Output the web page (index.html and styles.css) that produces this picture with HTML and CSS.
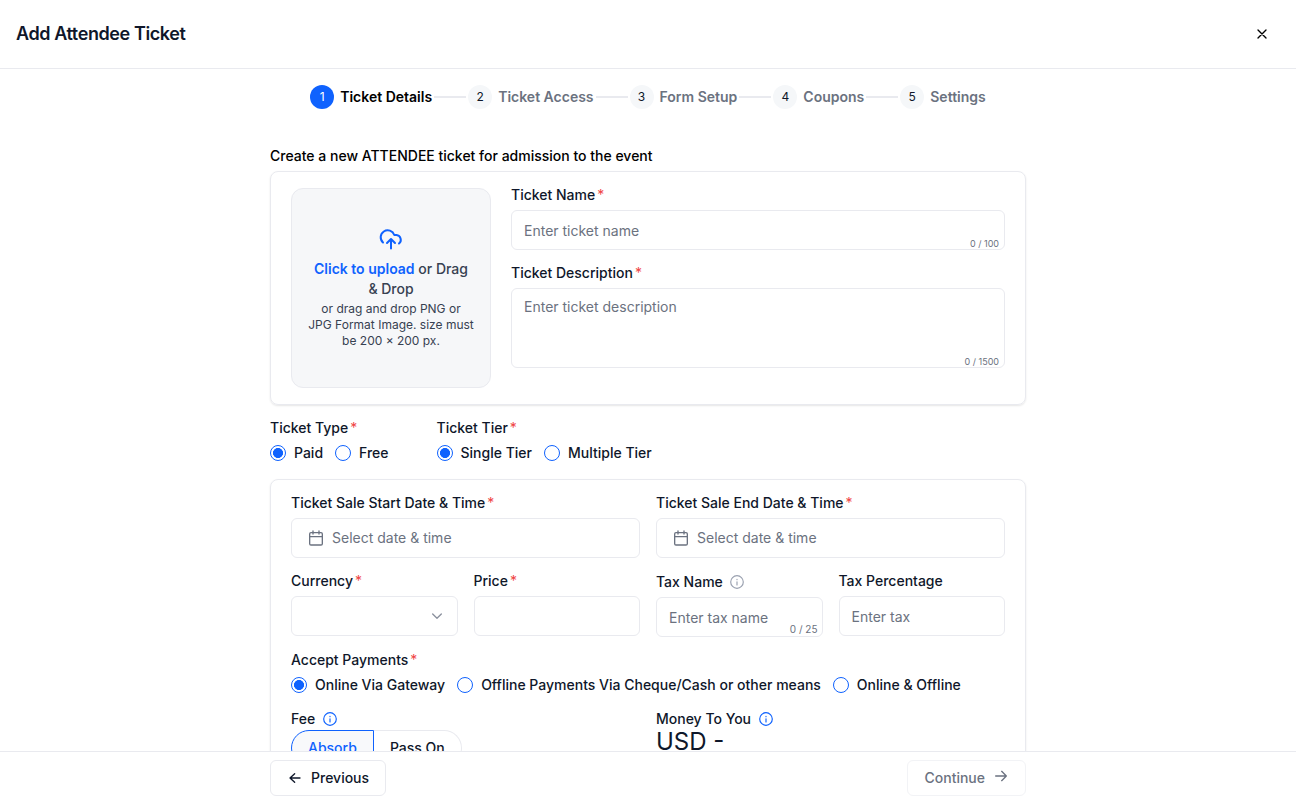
FILE: index.html
```html
<!DOCTYPE html>
<html lang="en">
<head>
    <meta charset="UTF-8">
    <meta name="viewport" content="width=device-width, initial-scale=1.0">
    <title>Add Attendee Ticket</title>
    <link rel="stylesheet" href="styles.css">
</head>
<body>
    <!-- Shared icons -->
    <svg class="sprite" aria-hidden="true">
        <symbol id="calendar" viewBox="0 0 24 24">
            <path d="M7.500 1.500v4.500M16.500 1.500v4.500M2.500 10h19"/>
            <rect x="2.500" y="4" width="19" height="18.500" rx="2"/>
        </symbol>
        <symbol id="info" viewBox="0 0 24 24">
            <circle cx="12" cy="12" r="10.800"/>
            <path d="M12 17v-5.500M12 7.500v.5"/>
        </symbol>
    </svg>

    <header class="header">
        <h1>Add Attendee Ticket</h1>
        <button type="button" class="close" aria-label="Close">
            <svg width="16" height="16" viewBox="0 0 24 24"><path d="M18 6 6 18M6 6l12 12"/></svg>
        </button>
    </header>

    <main class="content">
        <nav class="stepper">
            <div class="step active"><span class="num">1</span><span>Ticket Details</span></div>
            <div class="line"></div>
            <div class="step"><span class="num">2</span><span>Ticket Access</span></div>
            <div class="line"></div>
            <div class="step"><span class="num">3</span><span>Form Setup</span></div>
            <div class="line"></div>
            <div class="step"><span class="num">4</span><span>Coupons</span></div>
            <div class="line"></div>
            <div class="step"><span class="num">5</span><span>Settings</span></div>
        </nav>

        <form class="form">
            <p class="intro">Create a new ATTENDEE ticket for admission to the event</p>

            <section class="card details">
                <div class="upload">
                    <svg width="24" height="24" viewBox="0 0 24 24"><path d="M4 15.500A7 7 0 1 1 15.300 8H17.500a4.800 4.800 0 0 1 2.500 8.500M12 21.500v-9M8 16l4-4 4 4"/></svg>
                    <p class="upload-title"><b>Click to upload</b> or Drag &amp; Drop</p>
                    <p class="upload-text">or drag and drop PNG or JPG Format Image. size must be 200 × 200 px.</p>
                </div>
                <div class="fields">
                    <div class="field">
                        <label for="name">Ticket Name<i>*</i></label>
                        <div class="control">
                            <input type="text" id="name" placeholder="Enter ticket name">
                            <span class="count">0 / 100</span>
                        </div>
                    </div>
                    <div class="field">
                        <label for="description">Ticket Description<i>*</i></label>
                        <div class="control">
                            <textarea id="description" placeholder="Enter ticket description"></textarea>
                            <span class="count">0 / 1500</span>
                        </div>
                    </div>
                </div>
            </section>

            <div class="options">
                <div class="field type">
                    <label>Ticket Type<i>*</i></label>
                    <div class="radios">
                        <label><input type="radio" name="type" checked>Paid</label>
                        <label><input type="radio" name="type">Free</label>
                    </div>
                </div>
                <div class="field">
                    <label>Ticket Tier<i>*</i></label>
                    <div class="radios">
                        <label><input type="radio" name="tier" checked>Single Tier</label>
                        <label><input type="radio" name="tier">Multiple Tier</label>
                    </div>
                </div>
            </div>

            <section class="card sale">
                <div class="field wide">
                    <label>Ticket Sale Start Date &amp; Time<i>*</i></label>
                    <button type="button" class="date"><svg width="16" height="16"><use href="#calendar"/></svg>Select date &amp; time</button>
                </div>
                <div class="field wide">
                    <label>Ticket Sale End Date &amp; Time<i>*</i></label>
                    <button type="button" class="date"><svg width="16" height="16"><use href="#calendar"/></svg>Select date &amp; time</button>
                </div>
                <div class="field">
                    <label>Currency<i>*</i></label>
                    <button type="button" class="select" aria-label="Currency">
                        <svg width="16" height="16" viewBox="0 0 24 24"><path d="m5.500 9 6.500 6.500L18.500 9"/></svg>
                    </button>
                </div>
                <div class="field">
                    <label for="price">Price<i>*</i></label>
                    <input type="text" id="price">
                </div>
                <div class="field">
                    <label for="tax-name" class="with-icon">Tax Name<svg width="14" height="14"><use href="#info"/></svg></label>
                    <div class="control">
                        <input type="text" id="tax-name" placeholder="Enter tax name">
                        <span class="count tax-count">0 / 25</span>
                    </div>
                </div>
                <div class="field">
                    <label for="tax">Tax Percentage</label>
                    <input type="text" id="tax" placeholder="Enter tax">
                </div>
                <div class="field full">
                    <label>Accept Payments<i>*</i></label>
                    <div class="radios">
                        <label><input type="radio" name="payment" checked>Online Via Gateway</label>
                        <label><input type="radio" name="payment">Offline Payments Via Cheque/Cash or other means</label>
                        <label><input type="radio" name="payment">Online &amp; Offline</label>
                    </div>
                </div>
                <div class="fee wide">
                    <div class="fee-label">Fee<svg width="14" height="14"><use href="#info"/></svg></div>
                    <div class="tabs">
                        <button type="button" class="selected">Absorb</button>
                        <button type="button">Pass On</button>
                    </div>
                </div>
                <div class="fee wide">
                    <div class="fee-label">Money To You<svg width="14" height="14"><use href="#info"/></svg></div>
                    <div class="amount">USD -</div>
                </div>
            </section>
        </form>
    </main>

    <footer class="footer">
        <div class="footer-inner">
            <button type="button" class="btn">
                <svg width="16" height="16" viewBox="0 0 24 24"><path d="M19.500 12H4.500M11.500 5.500l-7 6.500 7 6.500"/></svg>Previous
            </button>
            <button type="button" class="btn next" disabled>
                Continue<svg width="16" height="16" viewBox="0 0 24 24"><path d="M4 12h16M13 5l7 7-7 7"/></svg>
            </button>
        </div>
    </footer>
</body>
</html>
```

FILE: styles.css
```css
* {
    box-sizing: border-box;
}
body {
    margin: 0;
    height: 100vh;
    display: flex;
    flex-direction: column;
    overflow: hidden;
    font-family: Inter, sans-serif;
    font-size: 14px;
    line-height: 20px;
    color: #0f172a;
    background: white;
}
p, h1 {
    margin: 0;
}
button, input, textarea {
    font: inherit;
    color: inherit;
}
svg {
    fill: none;
    stroke: currentColor;
    stroke-width: 2;
    stroke-linecap: round;
    stroke-linejoin: round;
    flex-shrink: 0;
}
.sprite {
    display: none;
}

/* Header */
.header {
    height: 69px;
    flex-shrink: 0;
    display: flex;
    align-items: center;
    justify-content: space-between;
    padding: 0 26px 0 16px;
    border-bottom: 1px solid #e9eaef;
}
.header h1 {
    font-size: 18px;
    font-weight: 600;
    letter-spacing: -0.4px;
}
.close {
    display: flex;
    padding: 0;
    border: none;
    background: none;
    color: #000;
}

.content {
    flex: 1;
    min-height: 0;
    overflow: hidden;
}

/* Steps */
.stepper {
    display: flex;
    justify-content: center;
    align-items: center;
    gap: 2px;
    padding-top: 16px;
}
.step {
    display: flex;
    align-items: center;
    gap: 6px;
    font-weight: 600;
    color: #6b7280;
}
.num {
    width: 24px;
    height: 24px;
    border-radius: 50%;
    background: #f5f7f9;
    color: #0f172a;
    font-size: 12px;
    font-weight: 400;
    line-height: 24px;
    text-align: center;
}
.step.active {
    color: #000;
}
.step.active .num {
    background: #0f62fe;
    color: white;
}
.line {
    width: 32px;
    height: 2px;
    background: #e9eaef;
}

/* Form */
.form {
    width: 756px;
    margin: 37px auto 0;
}
.intro {
    margin-bottom: 5px;
    color: #000;
    font-weight: 500;
}
.card {
    padding: 16px 20px;
    border: 1px solid #e9eaef;
    border-radius: 8px;
    box-shadow: 0 1px 2px rgba(0, 0, 0, 0.1);
}
.details {
    display: flex;
    gap: 20px;
}
.upload {
    width: 200px;
    height: 200px;
    display: flex;
    flex-direction: column;
    align-items: center;
    justify-content: center;
    padding: 0 16px;
    border: 1px solid #e9eaef;
    border-radius: 12px;
    background: #f6f7f9;
    color: #374151;
    text-align: center;
}
.upload svg {
    color: #0f62fe;
    margin-bottom: 8px;
}
.upload-title {
    font-weight: 500;
}
.upload b {
    color: #0f62fe;
    font-weight: 600;
}
.upload-text {
    margin-top: 2px;
    font-size: 12px;
    line-height: 16px;
}
.fields {
    flex: 1;
    display: flex;
    flex-direction: column;
    gap: 16px;
}
.field {
    display: flex;
    flex-direction: column;
    gap: 8px;
    min-width: 0;
}
.field label {
    line-height: 14px;
    font-weight: 500;
}
.field i {
    margin-left: 2px;
    color: #ef4444;
    font-style: normal;
    font-weight: 400;
}
.field .with-icon {
    display: flex;
    align-items: center;
    gap: 7px;
    height: 15px;
}
.with-icon svg {
    color: #9aa1b0;
}
.control {
    position: relative;
    display: flex;
}
input[type="text"], textarea, .date, .select {
    width: 100%;
    height: 40px;
    padding: 9px 12px;
    border: 1px solid #e9eaef;
    border-radius: 6px;
    background: white;
    outline: none;
}
textarea {
    height: 80px;
    padding: 8px 12px;
    resize: none;
}
::placeholder {
    color: #6b7280;
    opacity: 1;
}
.count {
    position: absolute;
    right: 6px;
    bottom: 0;
    color: #6b7280;
    font-size: 9px;
    line-height: 12px;
}
.tax-count {
    right: 5px;
    bottom: 2px;
    font-size: 10px;
}
.options {
    display: flex;
    gap: 48px;
    margin: 16px 0 18px;
}
.options .field, .field.full {
    gap: 10px;
}
.radios {
    display: flex;
    gap: 12px;
}
.radios label {
    display: flex;
    align-items: center;
    gap: 8px;
    line-height: 16px;
}
.radios input {
    appearance: none;
    width: 16px;
    height: 16px;
    margin: 0;
    border: 1px solid #0f62fe;
    border-radius: 50%;
}
.radios input:checked {
    background: radial-gradient(circle, #0f62fe 4.7px, transparent 5.3px);
}

/* Sale settings */
.sale {
    display: grid;
    grid-template-columns: repeat(4, 1fr);
    gap: 16px;
}
.wide {
    grid-column: span 2;
}
.full {
    grid-column: span 4;
}
.date {
    display: flex;
    align-items: center;
    gap: 8px;
    padding: 0 16px;
    color: #6b7280;
}
.select {
    display: flex;
    align-items: center;
    justify-content: flex-end;
    color: #8b919e;
}
.fee-label {
    display: flex;
    align-items: center;
    gap: 8px;
    height: 21px;
    padding-bottom: 2px;
    font-weight: 500;
}
.fee-label svg {
    color: #0f62fe;
}
.tabs {
    display: flex;
}
.tabs button {
    height: 36px;
    padding: 0 16px;
    border: 1px solid #e9eaef;
    border-left: none;
    border-radius: 0 18px 18px 0;
    background: white;
    font-weight: 500;
}
.tabs .selected {
    border: 1px solid #0f62fe;
    border-radius: 18px 0 0 18px;
    background: #f8f9fb;
    color: #0f62fe;
}
.amount {
    font-size: 24px;
    line-height: 24px;
}

/* Footer */
.footer {
    height: 53px;
    flex-shrink: 0;
    padding-top: 8px;
    border-top: 1px solid #e9eaef;
    background: white;
}
.footer-inner {
    width: 756px;
    margin: 0 auto;
    display: flex;
    justify-content: space-between;
}
.btn {
    height: 36px;
    display: flex;
    align-items: center;
    gap: 8px;
    padding: 0 16px;
    border: 1px solid #e9eaef;
    border-radius: 6px;
    background: white;
    font-weight: 500;
}
.next {
    border-color: #f2f3f6;
    color: #6b7280;
}
.next svg {
    margin-bottom: 4px;
}
```
